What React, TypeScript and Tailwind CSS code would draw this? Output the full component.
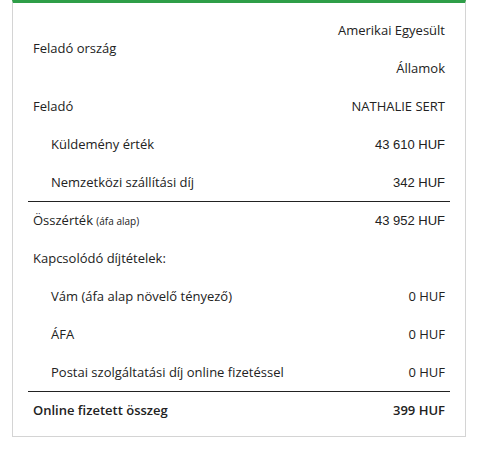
const font = "font-['Open_Sans',sans-serif]";
const num = "font-['Liberation_Sans',sans-serif]";

type Row = { label: React.ReactNode; value: React.ReactNode; indent?: boolean; top?: boolean; bold?: boolean };

const rows: Row[] = [
  { label: "Feladó", value: "NATHALIE SERT" },
  { label: "Küldemény érték", value: <span className={num}>43 610 HUF</span>, indent: true },
  { label: "Nemzetközi szállítási díj", value: <span className={num}>342 HUF</span>, indent: true },
  {
    label: <>Összérték <span className="text-[10px]">(áfa alap)</span></>,
    value: <span className={num}>43 952 HUF</span>,
    top: true,
  },
  { label: "Kapcsolódó díjtételek:", value: "" },
  { label: "Vám (áfa alap növelő tényező)", value: "0 HUF", indent: true },
  { label: "ÁFA", value: "0 HUF", indent: true },
  { label: "Postai szolgáltatási díj online fizetéssel", value: "0 HUF", indent: true },
  { label: "Online fizetett összeg", value: "399 HUF", top: true, bold: true },
];

export default function App() {
  return (
    <div className={`w-[480px] h-[459px] bg-white ${font}`}>
      <div className="ml-[12px] w-[454px] border border-[#d4d4d4] border-t-[3px] border-t-[#2e9e48] px-[15px] pt-[8px] pb-[7px] text-[13px] text-[#222]">
        {/* Feladó ország — value wraps onto two lines */}
        <div className="grid grid-cols-[1fr_140px] items-center">
          <div className="pl-[5px]">Feladó ország</div>
          <div className="pr-[5px] text-right leading-[38px]">
            Amerikai Egyesült
            <br />
            Államok
          </div>
        </div>
        {rows.map((r, i) => (
          <div
            key={i}
            className={`grid h-[38px] grid-cols-[1fr_140px] items-center pt-[1px] leading-normal ${
              r.top ? "border-t border-[#222]" : ""
            } ${r.bold ? "font-semibold" : ""}`}
          >
            <div className={r.indent ? "pl-[23px]" : "pl-[5px]"}>{r.label}</div>
            <div className="pr-[5px] text-right">{r.value}</div>
          </div>
        ))}
      </div>
    </div>
  );
}
